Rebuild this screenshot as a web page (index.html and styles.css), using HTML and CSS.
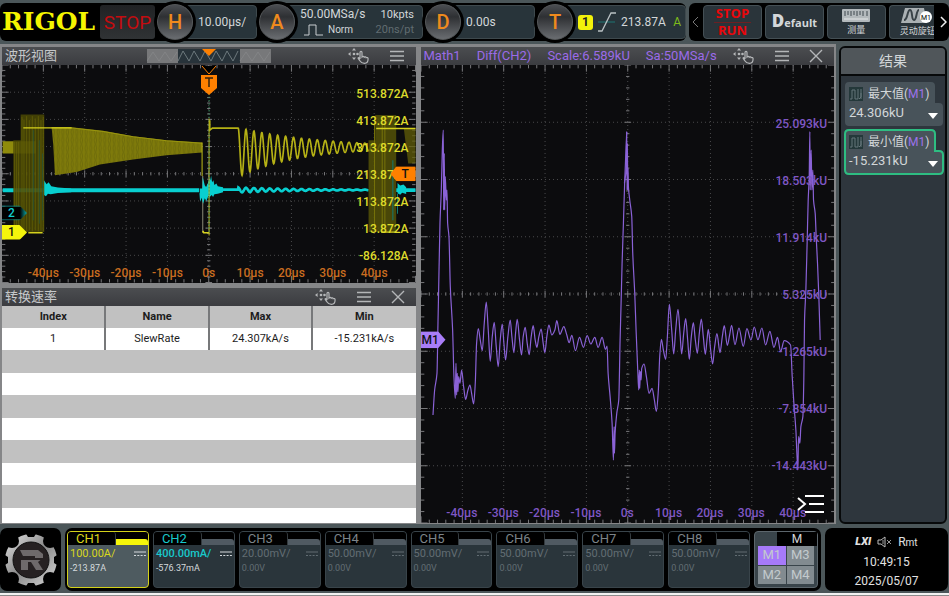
FILE: index.html
```html
<!DOCTYPE html>
<html lang="zh-CN">
<head>
<meta charset="utf-8">
<title>RIGOL</title>
<link rel="stylesheet" href="styles.css">
</head>
<body>
<svg class="defs" aria-hidden="true">
  <symbol id="drag" viewBox="0 0 22 16">
    <g fill="currentColor"><path d="M6 0l2 2.600H4zM6 12l2-2.600H4zM0 6l2.600-2v4z"/><circle cx="6" cy="6" r="1.300"/><circle cx="9.500" cy="6" r="1.300"/></g>
    <path d="M12 11V4.500c0-1.500 2-1.500 2 0V9c1-1 2-.7 2.200.2 1-.7 1.900-.3 2 .5 1-.5 1.900 0 1.900 1 0 3-1 4.600-3.600 4.600-2.500 0-3.700-1-4.700-2.600l-1.600-2.300c-.4-1 .8-1.500 1.800.6z" fill="none" stroke="currentColor" stroke-width="1.200"/>
  </symbol>
  <symbol id="menu" viewBox="0 0 16 12"><path d="M1 1.500h14M1 6h14M1 10.500h14" stroke="currentColor" stroke-width="1.400"/></symbol>
  <symbol id="close" viewBox="0 0 14 14"><path d="M1 1l12 12M13 1L1 13" stroke="currentColor" stroke-width="1.400"/></symbol>
  <symbol id="dc" viewBox="0 0 12 6"><path d="M0 1h12" stroke="currentColor"/><path d="M0 4.500h12" stroke="currentColor" stroke-dasharray="2 1.300"/></symbol>
  <symbol id="stat" viewBox="0 0 14 14"><rect width="14" height="14" fill="#24383a"/><path d="M1 12h2V3h3v9h3V2M12 2v8l-2 2M12 12V6" fill="none" stroke="#65777a"/></symbol>
  <linearGradient id="steel" x1="0" y1="0" x2="1" y2="1"><stop offset="0" stop-color="#e4e4e4"/><stop offset=".5" stop-color="#8a8a8a"/><stop offset="1" stop-color="#dadada"/></linearGradient>
  <pattern id="weave" width="14" height="24" patternUnits="userSpaceOnUse"><path d="M0 0h14v24H0z" fill="#7e7a0b"/><path d="M3 0l3 12-3 12M10 0L8 12l2 12" fill="none" stroke="#6a6709" stroke-width="2"/></pattern>
</svg>

<header class="topbar">
  <div class="bar settings">
    <div class="brand">RIGOL</div>
    <button class="state">STOP</button>
    <div class="group"><button class="knob">H</button><div class="panel">10.00µs/</div></div>
    <div class="group"><button class="knob">A</button>
      <div class="panel acquire">
        <div><span>50.00MSa/s</span><span class="small">10kpts</span></div>
        <div><span class="norm"><svg width="20" height="12" viewBox="0 0 20 12"><path d="M0 11h5V1h7v10h7" fill="none" stroke="#c8cdd0"/></svg>Norm</span><span class="small faint">20ns/pt</span></div>
      </div>
    </div>
    <div class="group"><button class="knob">D</button><div class="panel">0.00s</div></div>
    <div class="group"><button class="knob">T</button>
      <div class="panel trigger"><b class="source">1</b>
        <svg width="20" height="22" viewBox="0 0 20 22"><path d="M1 11h17" stroke="#1d7473"/><path d="M1 20h4L14 2h5" fill="none" stroke="#b9c1c4" stroke-width="1.300"/></svg>
        <span>213.87A</span><span class="auto">A</span></div>
    </div>
  </div>
  <nav class="bar tools">
    <button class="arrow"><svg width="7" height="12" viewBox="0 0 7 12"><path d="M6 1L1 6l5 5" fill="none" stroke="#777"/></svg></button>
    <button class="tool run"><span>STOP</span><span>RUN</span></button>
    <button class="tool default"><span><b>D</b>efault</span></button>
    <button class="tool"><svg width="28" height="14" viewBox="0 0 28 14"><rect width="28" height="13" rx="1" fill="#b3b9bc"/><path d="M3 2v5M6 2v4M9 2v5M12 2v4M15 2v5M18 2v4M21 2v5M25 2v5" stroke="#3e484e"/><path d="M2 10h24" stroke="#e3e6e7"/></svg>测量</button>
    <button class="tool knobtool"><svg width="32" height="17" viewBox="0 0 32 17"><path d="M5 1h19l3 15H1z" fill="#aab0b3"/><path d="M4 13c4 0 3-10 6-10s1 10 4 10 2-10 5-10" fill="none" stroke="#394247" stroke-width="2"/><circle cx="26" cy="10" r="6" fill="#fff"/><text x="26" y="13" text-anchor="middle" font-size="7">M1</text></svg>灵动旋钮</button>
    <button class="arrow"><svg width="7" height="12" viewBox="0 0 7 12"><path d="M1 1l5 5-5 5" fill="none" stroke="#eee" stroke-width="1.500"/></svg></button>
  </nav>
</header>

<main class="workspace">
  <div class="windows">
    <section class="window">
      <div class="title">
        <h2>波形视图</h2>
        <svg class="preview" width="124" height="14" viewBox="0 0 124 14"><path d="M0 0h124v14H0z" fill="#77787a"/><path d="M31 0h62v14H31z" fill="#28333a"/><path d="M0 12L6 3l6 9 6-9 6 9 6-9" fill="none" stroke="#838486"/><path d="M31 12l5-10 6 10 5-10 6 10 5-10 6 10 5-10 6 10 5-10 6 10 5-10" fill="none" stroke="#6d797d"/><path d="M93 12l6-9 6 9 6-9 6 9 6-9" fill="none" stroke="#838486"/><path d="M55 0h14l-7 7z" fill="#ff8000"/></svg>
        <div class="actions"><button><svg width="22" height="16"><use href="#drag"/></svg></button><button><svg width="16" height="12"><use href="#menu"/></svg></button></div>
      </div>
      <div class="plot overview">
        <svg class="canvas" viewBox="0 0 1242 651" preserveAspectRatio="none">
          <g class="graticule"></g>
          <g transform="translate(-6 -15)">
            <path class="c2" d="M8 384h590v12H8z"/>
            <path class="c2" d="M132 360l8 12 6-6 8 12 20 4 40 3v11l-40 2-22 4-8-2-6 8-6-4z"/>
            <path d="M8 243h99v37H8z" fill="#8f8b0c"/>
            <path d="M40 240h22V163h71v352H40z" fill="#494705" opacity=".88"/>
            <path d="M44 245v260M50 245v264M56 245v268M66 170v342M72 178v330M80 168v345M88 180v330M97 168v345M106 175v335M115 168v345M123 180v330M130 170v343" stroke="#6b6708" stroke-width="2" fill="none"/>
            <path d="M100 210v270M118 240v250M128 280v200" stroke="#205a49" fill="none" stroke-width="2"/>
            <path d="M155 201h60l95 11 90 16 100 12 107 7v30l-107 8-100 13-100 15-70 22-65 10-5-90z" fill="url(#weave)"/>
            <path d="M155 203h55l100 11 90 16 100 12 107 7" fill="none" stroke="#99950f" stroke-width="3"/>
            <path d="M70 203h145M85 517h43" stroke="#d5d11d" stroke-width="4"/>
            <path d="M607 247v100" stroke="#c1bd18" stroke-width="3"/><path d="M609 347v170" stroke="#8c8c78" stroke-width="3"/><path d="M609 512l3 5h16" fill="none" stroke="#d5d11d" stroke-width="5"/>
          </g>
          <g transform="translate(594 -15)">
            <path class="c2" d="M0 385h8l1-35 6 25 4 5 5-10 5-15 3 5 2-14 3 20 4-6 3 14 6-4 4 8 16 3v15l-16 4-10 2-4 8-4-6-6 6-4-4-6 16-5-8-5 16-4-18-5 12-2-25H0z"/>
            <path id="ripple" fill="none" stroke="#08cfd0" stroke-width="8"/>
            <path class="c2" d="M590 384h58v11h-58zM594 368l8 8 10-3 8 8v20l-12-4-6 6-8-4z"/>
            <path d="M28 175v350" stroke="#b9b51b" stroke-width="3"/><path d="M28 60v460" stroke="#3c9163" stroke-width="3" stroke-dasharray="4 6"/>
            <path id="ringing" fill="none" stroke="#b5b115" stroke-width="5"/>
            <path d="M507 240h20v-75h63v350h-83z" fill="#555207" opacity=".85"/><path d="M525 170v340M548 170v340M556 170v340" stroke="#77730a" stroke-width="3"/>
            <path d="M580 300v180M594 400v60" stroke="#117875" stroke-width="3"/>
            <path d="M613 205h35v105h-22z" fill="#615e08" opacity=".75"/><path d="M530 205h118M545 515h45" stroke="#d5d11d" stroke-width="4"/>
          </g>
        </svg>
        <svg class="flag-top" width="18" height="30" viewBox="0 0 18 30"><path d="M2 1l7 8 7-8" fill="#000" stroke="#ff8000"/><path d="M1 10h16v13l-8 7-8-7z" fill="#ff8000"/><path d="M5 13h8M9 13v9" stroke="#33200c" stroke-width="1.500"/></svg>
        <div class="ylabels"><span>513.872A</span><span>413.872A</span><span>313.872A</span><span>213.872A</span><span>113.872A</span><span>13.872A</span><span>-86.128A</span></div>
        <div class="xlabels"><span>-40µs</span><span>-30µs</span><span>-20µs</span><span>-10µs</span><span>0s</span><span>10µs</span><span>20µs</span><span>30µs</span><span>40µs</span></div>
        <div class="flag ch2">2</div><div class="flag ch1">1</div><div class="flag level-flag">T</div>
      </div>
    </section>

    <section class="window math">
      <div class="title">
        <h2><span>Math1</span><span>Diff(CH2)</span><span>Scale:6.589kU</span><span>Sa:50MSa/s</span></h2>
        <div class="actions"><button><svg width="22" height="16"><use href="#drag"/></svg></button><button><svg width="16" height="12"><use href="#menu"/></svg></button><button><svg width="14" height="14"><use href="#close"/></svg></button></div>
      </div>
      <div class="plot">
        <svg class="canvas" viewBox="0 0 1242 1374" preserveAspectRatio="none">
          <g class="graticule"></g>
          <g class="trace">
            <path transform="translate(-9 75)" data-points="45,975 50,900 57,850 60,700 62,600 66,400 70,300 73,180 76,120 77,360 79,190 80,360 82,260 85,330 87,300 89,400 93,440 97,590 104,720 108,860 112,925 114,820 116,915 118,850 120,905 122,860 126,880 131,840 137,890 143,928 150,900 156,885 161,910 167,942 172,880 176,760 181,716 187,750 193,782 199,700 205,636 211,720 217,814 223,740 229,697 235,770 241,830 247,750 253,702 258,760 263,810 270,740 277,690 282,740 288,788 293,730 298,688 305,750 311,795 316,740 322,712 328,760 334,794 340,740 346,707 352,750 357,772 363,740 370,717 376,760 381,788 387,740 393,705 402,735 411,720 417,692 426,733 438,710 447,735 454,758 462,736 473,782 485,742 497,772 508,737 519,762 531,742 541,772 553,742 563,778 568,768 571,850 577,920 583,1000 587,1110 589,1010 590,1090 592,1030 597,970 603,930 607,750 610,640 613,520 617,400 621,270 627,125"/>
            <path transform="translate(597 75)" data-points="14,280 19,240 21,125 22,300 23,160 24,300 25,235 26,290 30,330 36,380 39,490 45,610 49,720 54,840 57,900 59,840 60,895 62,845 64,870 66,835 73,822 80,860 88,910 97,895 104,930 110,964 116,900 120,800 125,748 131,780 138,808 143,740 149,643 156,720 162,792 168,720 175,658 181,730 186,792 192,730 198,686 204,750 209,808 215,740 221,698 227,750 233,790 239,730 245,687 251,740 257,793 262,750 266,718 273,780 279,822 285,770 292,731 301,788 308,740 314,707 323,766 330,735 336,706 346,764 358,714 371,769 382,716 394,750 404,711 415,749 427,714 438,765 451,724 463,772 474,742 483,785 494,752 513,765 518,860 523,940 529,1020 535,1140 537,1040 541,1060 544,1010 550,980 553,860 555,690 559,600 563,450 566,330 569,260 571,125 572,300 575,180 577,300 580,240 582,330 587,370 590,440 594,520 598,620 602,750"/>
          </g>
        </svg>
        <div class="ylabels"><span>25.093kU</span><span>18.503kU</span><span>11.914kU</span><span>5.325kU</span><span>-1.265kU</span><span>-7.854kU</span><span>-14.443kU</span></div>
        <div class="xlabels"><span>-40µs</span><span>-30µs</span><span>-20µs</span><span>-10µs</span><span>0s</span><span>10µs</span><span>20µs</span><span>30µs</span><span>40µs</span></div>
        <div class="flag m1">M1</div>
        <button class="expand"><svg width="28" height="20" viewBox="0 0 28 20"><path d="M1 4l7 6-7 6M8 2h19M12 10h15M8 18h19" fill="none" stroke="#fff" stroke-width="2"/></svg></button>
      </div>
    </section>

    <section class="window">
      <div class="title">
        <h2>转换速率</h2>
        <div class="actions"><button><svg width="22" height="16"><use href="#drag"/></svg></button><button><svg width="16" height="12"><use href="#menu"/></svg></button><button><svg width="14" height="14"><use href="#close"/></svg></button></div>
      </div>
      <div class="sheet">
        <table>
          <thead><tr><th>Index</th><th>Name</th><th>Max</th><th>Min</th></tr></thead>
          <tbody>
            <tr><td>1</td><td>SlewRate</td><td>24.307kA/s</td><td>-15.231kA/s</td></tr>
            <tr><td colspan="4"></td></tr><tr><td colspan="4"></td></tr><tr><td colspan="4"></td></tr><tr><td colspan="4"></td></tr><tr><td colspan="4"></td></tr><tr><td colspan="4"></td></tr><tr><td colspan="4"></td></tr>
          </tbody>
        </table>
      </div>
    </section>
  </div>

  <aside class="results">
    <h2>结果</h2>
    <button class="result"><svg class="shape" viewBox="0 0 100 46" preserveAspectRatio="none"><path d="M5 1h82q4 0 4 4v17h4q4 0 4 4v15q0 4-4 4H5q-4 0-4-4V5q0-4 4-4z"/></svg>
      <span class="name"><svg width="14" height="14"><use href="#stat"/></svg>最大值(<i>M1</i>)</span><span class="value">24.306kU<svg width="10" height="6"><path d="M0 0h10L5 6z" fill="#fff"/></svg></span></button>
    <button class="result selected"><svg class="shape" viewBox="0 0 100 46" preserveAspectRatio="none"><path d="M5 1h82q4 0 4 4v17h4q4 0 4 4v15q0 4-4 4H5q-4 0-4-4V5q0-4 4-4z"/></svg>
      <span class="name"><svg width="14" height="14"><use href="#stat"/></svg>最小值(<i>M1</i>)</span><span class="value">-15.231kU<svg width="10" height="6"><path d="M0 0h10L5 6z" fill="#fff"/></svg></span></button>
  </aside>
</main>

<footer class="bottombar">
  <button class="home">
    <svg width="54" height="54" viewBox="0 0 54 54"><circle cx="27" cy="27" r="26" fill="url(#steel)"/><g fill="#000"><circle cx="8" cy="8" r="7"/><circle cx="46" cy="8" r="7"/><circle cx="8" cy="46" r="7"/><circle cx="46" cy="46" r="7"/><path d="M21-1h12l-3 5h-6zM21 55h12l-3-5h-6zM-1 21v12l5-3v-6zM55 21v12l-5-3v-6z"/></g><circle cx="27" cy="27" r="18" fill="#262122" stroke="#111"/><path d="M16 17h18l5 4v4l-5 4 5 8h-7l-5-8h-3v8h-7V27h14v-4H19z" fill="#6e6a6b"/><path d="M12 26h30" stroke="#262122" stroke-width="2"/></svg>
  </button>
  <div class="channels">
    <button class="channel on one"><span class="head"><span class="tab">CH1</span><span class="stripe"></span></span><span class="scale">100.00A/<svg width="12" height="6"><use href="#dc"/></svg></span><span class="offset">-213.87A</span></button>
    <button class="channel on two"><span class="head"><span class="tab">CH2</span><span class="stripe"></span></span><span class="scale">400.00mA/<svg width="12" height="6"><use href="#dc"/></svg></span><span class="offset">-576.37mA</span></button>
    <button class="channel"><span class="head"><span class="tab">CH3</span><span class="stripe"></span></span><span class="scale">20.00mV/<svg width="12" height="6"><use href="#dc"/></svg></span><span class="offset">0.00V</span></button>
    <button class="channel"><span class="head"><span class="tab">CH4</span><span class="stripe"></span></span><span class="scale">50.00mV/<svg width="12" height="6"><use href="#dc"/></svg></span><span class="offset">0.00V</span></button>
    <button class="channel"><span class="head"><span class="tab">CH5</span><span class="stripe"></span></span><span class="scale">50.00mV/<svg width="12" height="6"><use href="#dc"/></svg></span><span class="offset">0.00V</span></button>
    <button class="channel"><span class="head"><span class="tab">CH6</span><span class="stripe"></span></span><span class="scale">50.00mV/<svg width="12" height="6"><use href="#dc"/></svg></span><span class="offset">0.00V</span></button>
    <button class="channel"><span class="head"><span class="tab">CH7</span><span class="stripe"></span></span><span class="scale">50.00mV/<svg width="12" height="6"><use href="#dc"/></svg></span><span class="offset">0.00V</span></button>
    <button class="channel"><span class="head"><span class="tab">CH8</span><span class="stripe"></span></span><span class="scale">50.00mV/<svg width="12" height="6"><use href="#dc"/></svg></span><span class="offset">0.00V</span></button>
    <div class="maths"><span class="mtab">M</span><div class="mgrid"><button class="active">M1</button><button>M3</button><button>M2</button><button>M4</button></div></div>
  </div>
  <div class="status">
    <div class="icons"><b>LXI</b><svg width="15" height="12" viewBox="0 0 15 12"><path d="M1 4h3l4-3v10L4 8H1z" fill="none" stroke="#bbb"/><path d="M6 4v4M10 4l4 4M14 4l-4 4" stroke="#999"/></svg><span>R<small>mt</small></span></div>
    <time>10:49:15</time><time>2025/05/07</time>
  </div>
</footer>
<script src="app.js"></script>
</body>
</html>
```
FILE: styles.css
```css
* { box-sizing: border-box; }
body {
  margin: 0;
  min-height: 100vh;
  display: flex;
  flex-direction: column;
  padding-top: 3px;
  background: #4b5659;
  border-bottom: 1px solid #8b8b8b;
  font-family: Roboto, "Noto Sans CJK SC", sans-serif;
  font-size: 12px;
  color: #d3d7d9;
}
button { font: inherit; color: inherit; border: 0; padding: 0; margin: 0; background: none; }
svg { display: block; flex: none; }
h2 { margin: 0; font-weight: 400; }
.defs { width: 0; height: 0; position: absolute; }

/* top bar */
.topbar { display: grid; grid-template-columns: minmax(0, 686fr) minmax(0, 260fr); gap: 3px; height: 38px; }
.bar { background: #000; border-radius: 6px; display: grid; align-items: center; }
.settings { grid-template-columns: 98px 55px minmax(0, 100fr) minmax(0, 164fr) minmax(0, 110fr) minmax(0, 149fr); gap: 2px; }
.brand { color: #f5f500; font: bold 25px/38px "DejaVu Serif", serif; padding-left: 2px; }
.state { height: 34px; border-radius: 3px; background: linear-gradient(#202224, #303335); color: #c40c10; font-size: 19px; }
.group { display: flex; align-items: center; height: 36px; }
.knob { flex: none; width: 36px; height: 36px; border-radius: 50%; position: relative; color: #ef8a1d; font-size: 20px; font-weight: 500; background: linear-gradient(#4a4d51, #2e3033 35%, #6a6d71); box-shadow: 0 0 0 3px #000; border: 1px solid #55585a; }
.panel { flex: 1; min-width: 0; height: 34px; margin-left: -8px; padding: 0 8px 0 12px; border: 1px solid #3e494d; border-radius: 4px; background: #28343a; display: flex; align-items: center; }
.acquire { flex-direction: column; justify-content: center; align-items: stretch; }
.acquire > div { display: flex; justify-content: space-between; align-items: center; line-height: 15px; }
.small { font-size: 11px; }
.faint { color: #616c71; }
.norm { display: flex; gap: 4px; align-items: center; font-size: 10px; padding-left: 4px; }
.trigger { gap: 4px; padding: 0 4px 0 12px; }
.source { width: 15px; height: 15px; border-radius: 3px; background: #f2f20a; color: #222; font-size: 12px; line-height: 15px; text-align: center; flex: none; }
.auto { margin-left: auto; color: #7fbb1b; }
.tools { grid-template-columns: 10px repeat(3, minmax(0, 60fr)) minmax(0, 46fr) 12px; gap: 3px; padding: 0 0 0 1px; }
.arrow { display: grid; place-items: center; }
.tool { height: 34px; border: 1px solid #444f54; border-radius: 4px; background: #2a343a; display: flex; flex-direction: column; align-items: center; justify-content: center; gap: 1px; font-size: 9px; line-height: 12px; overflow: hidden; white-space: nowrap; }
.knobtool { align-items: flex-start; padding-left: 10px; border-right: 0; border-radius: 4px 0 0 4px; }
.run { color: #e8070b; font: bold 13px/15px "Open Sans", sans-serif; gap: 1px; }
.run span + span { border-top: 1px solid #6b2023; padding: 0 4px; }
.default { font: bold 11px/20px "Open Sans", sans-serif; }
.default b { font-size: 17px; }

/* windows */
.workspace { flex: 1; display: grid; grid-template-columns: minmax(0, 1fr) 108px; gap: 3px; padding: 3px 2px 4px 0; }
.windows { display: grid; grid-template-columns: minmax(0, 1fr) minmax(0, 1fr); grid-template-rows: minmax(0, 1fr) minmax(0, 1fr); column-gap: 5px; row-gap: 5px; padding: 3px 2px 1px; background: #858688; }
.window { display: flex; flex-direction: column; min-width: 0; }
.math { grid-row: span 2; }
.title { height: 18px; flex: none; display: grid; grid-template-columns: 1fr auto 1fr; align-items: center; background: linear-gradient(#4b4d50, #3b3c40); color: #c6c8ca; padding: 0 3px; }
.title h2 { font-size: 13px; line-height: 18px; white-space: nowrap; }
.preview { grid-column: 2; }
.actions { grid-column: 3; justify-self: end; display: flex; align-items: center; gap: 19px; padding-right: 8px; color: #b4b6b8; }
.math h2 { display: flex; gap: 16px; color: #9b6be8; }
.plot { flex: 1; position: relative; background: #0c0c0e; overflow: hidden; min-height: 200px; }
.canvas { position: absolute; inset: 0; width: 100%; height: 100%; }
.ylabels { position: absolute; inset: 2px 7px 0 auto; display: grid; grid-template-rows: 1fr repeat(7, 2fr) 1fr; justify-items: end; align-items: center; line-height: 14px; color: #dedb2b; font-weight: 500; }
.ylabels::before, .xlabels::before { content: ""; }
.xlabels { position: absolute; inset: auto 0 2px 0; display: grid; grid-template-columns: 1fr repeat(9, 2fr) 1fr; text-align: center; line-height: 16px; color: #c96d20; font-weight: 500; }
.math .ylabels, .math .xlabels { color: #7f57c4; }
.c2 { fill: #08cfd0; }
.grid-line { stroke: #4a4a4c; stroke-dasharray: 1 3; vector-effect: non-scaling-stroke; }
.tick { stroke: #77777a; fill: none; vector-effect: non-scaling-stroke; }
.trace path { fill: none; stroke: #8a62d6; stroke-width: 1.2px; stroke-linejoin: round; vector-effect: non-scaling-stroke; }
.flag-top { position: absolute; top: 0; left: 50%; transform: translateX(-50%); }
.flag { position: absolute; left: 0; height: 15px; width: 25px; padding-left: 6px; line-height: 15px; transform: translateY(-50%); clip-path: polygon(0 0, 70% 0, 100% 50%, 70% 100%, 0 100%); color: #111; font-weight: 500; }
.ch2 { top: 68%; background: linear-gradient(90deg, #000 75%, #0b9292); color: #13cfd0; border: 1px solid #0b9292; line-height: 13px; border-left: 0; }
.ch1 { top: 77%; background: #f4f40b; }
.level-flag { top: 50%; left: auto; right: 0; background: #ff8000; padding-left: 11px; clip-path: polygon(0 50%, 24% 0, 100% 0, 100% 100%, 24% 100%); }
.m1 { top: 60%; height: 17px; line-height: 17px; padding-left: 1px; background: #a97df8; }
.expand { position: absolute; right: 9px; bottom: 9px; }

/* table */
.sheet { flex: 1; background: #fff; color: #1c1c1c; }
table { width: 100%; border-collapse: collapse; table-layout: fixed; font-size: 11px; }
tr { height: 22px; background: #fff; }
thead tr, tbody tr:nth-child(even) { background: #c1c1c1; }
tbody tr:nth-child(even) { height: 23px; }
th, td { padding: 0; text-align: center; }
th + th, td + td { border-left: 2px solid #77787a; }

/* results */
.results { margin-top: 2px; border: 2px solid #07090a; border-radius: 6px; background: #2e363d; min-width: 0; }
.results h2 { height: 28px; background: #50565a; border-bottom: 2px solid #07090a; text-align: center; font-size: 14px; line-height: 26px; border-radius: 4px 4px 0 0; margin-bottom: 5px; }
.result { position: relative; display: flex; flex-direction: column; width: calc(100% - 4px); height: 46px; margin: 0 2px 2px 3px; padding: 4px 4px 0 5px; text-align: left; }
.shape { position: absolute; inset: 0; width: 100%; height: 100%; }
.shape path { fill: #48535a; }
.selected .shape path { stroke: #2ebd82; stroke-width: 2; }
.name, .value { position: relative; display: flex; align-items: center; line-height: 18px; font-size: 12px; }
.name svg { margin-right: 5px; }
.name i { font-style: normal; color: #9d72ea; }
.value { justify-content: space-between; font-size: 13px; line-height: 20px; padding-right: 2px; }
.value svg { align-self: flex-end; margin-bottom: 4px; }

/* bottom bar */
.bottombar { height: 67px; display: grid; grid-template-columns: 61px minmax(0, 1fr) 123px; gap: 4px; padding: 0 1px 2px 0; border-bottom: 2px solid #f1f1f1; }
.home, .channels, .status { background: #000; border-radius: 7px; }
.home { display: grid; place-items: center; }
.channels { display: grid; grid-template-columns: repeat(8, minmax(0, 82fr)) minmax(0, 64fr); gap: 4px; padding: 3px 3px 3px 2px; }
.channel { display: flex; flex-direction: column; border: 1px solid #39444a; border-radius: 4px; background: #2a353b; color: #626d73; text-align: left; overflow: hidden; }
.head { display: flex; width: 100%; height: 13px; background: #000; }
.tab { width: 60%; border-right: 1px solid #333a3e; border-radius: 0 3px 0 0; font-size: 13px; line-height: 13px; padding-left: 8px; color: #7c8489; }
.stripe { flex: 1; align-self: flex-end; height: 6px; background: #505a62; border-radius: 0 3px 0 0; }
.scale { display: flex; width: 100%; justify-content: space-between; align-items: center; padding: 0 2px 0 2px; font-size: 11px; line-height: 18px; }
.offset { padding-left: 2px; font-size: 9px; line-height: 10px; }
.on .offset, .on .scale svg { color: #d5dadd; }
.one { border-color: #d4d21a; background: #4e5b60; }
.one .stripe { background: #f6f60a; }
.one .tab, .one .scale { color: #d9d71d; }
.two .tab, .two .scale { color: #19c9cc; }
.two .scale { font-weight: 500; }
.maths { border: 1px solid #5c666c; border-radius: 4px; background: #39444a; padding: 0 3px 3px; display: flex; flex-direction: column; }
.mtab { align-self: flex-end; width: 40px; height: 14px; background: #000; text-align: center; line-height: 14px; margin-right: -3px; }
.mgrid { flex: 1; display: grid; grid-template-columns: 1fr 1fr; grid-template-rows: 1fr 1fr; gap: 1px; }
.mgrid button { background: #828b90; color: #c3cacd; font-size: 13px; line-height: 18px; }
.mgrid .active { background: #a67afa; }
.status { display: flex; flex-direction: column; align-items: center; justify-content: center; gap: 5px; line-height: 14px; color: #e2e2e2; padding-top: 3px; }
.icons { display: flex; align-items: center; gap: 6px; }
.icons b { font-style: italic; font-weight: 900; font-size: 11px; }
.icons small { font-size: 10px; }
```
FILE: app.js
```js
// Graticule: 10 x 8 divisions, five minor ticks per division on edges and centre axes.
document.querySelectorAll('.graticule').forEach(function (g) {
  const box = g.ownerSVGElement.viewBox.baseVal;
  const w = box.width, h = box.height;
  let lines = '', ticks = '';
  for (let i = 1; i < 10; i++) lines += `M${w * i / 10} 0V${h}`;
  for (let i = 1; i < 8; i++) lines += `M0 ${h * i / 8}H${w}`;
  for (let i = 0; i <= 50; i++) {
    const x = w * i / 50, n = i % 5 ? 10 : 20;
    ticks += `M${x} 0v${n}M${x} ${h}v${-n}M${x} ${h / 2 - n / 2}v${n}`;
  }
  for (let i = 0; i <= 40; i++) {
    const y = h * i / 40, n = i % 5 ? 10 : 20;
    ticks += `M0 ${y}h${n}M${w} ${y}h${-n}M${w / 2 - n / 2} ${y}h${n}`;
  }
  g.innerHTML = `<path class="grid-line" fill="none" d="${lines}"/><path class="tick" d="${ticks}"/>`;
});

// Math trace: monotone cubic through the samples, flat at every local extremum.
document.querySelectorAll('.trace path').forEach(function (path) {
  const p = path.dataset.points.split(' ').map(s => s.split(',').map(Number));
  const slope = i => (p[i + 1][1] - p[i][1]) / (p[i + 1][0] - p[i][0]);
  const tangent = p.map(function (_, i) {
    if (i === 0) return slope(0);
    if (i === p.length - 1) return slope(i - 1);
    const a = slope(i - 1), b = slope(i);
    return a * b <= 0 ? 0 : 2 * a * b / (a + b);
  });
  let d = 'M' + p[0];
  for (let i = 1; i < p.length; i++) {
    const k = (p[i][0] - p[i - 1][0]) / 3;
    d += `C${p[i - 1][0] + k} ${p[i - 1][1] + k * tangent[i - 1]} ${p[i][0] - k} ${p[i][1] - k * tangent[i]} ${p[i][0]} ${p[i][1]}`;
  }
  path.setAttribute('d', d);
});

// Damped ringing of channel 1 and the small ripple of channel 2.
let ring = 'M30 180V210L38 204H115', ripple = 'M60 388H115';
for (let x = 116; x <= 560; x += 1) {
  const top = 262 - 57 * Math.exp((127 - x) / 250);
  const low = 262 + 83 * Math.exp((127 - x) / 180);
  const c = Math.cos(2 * Math.PI * (x - 127) / 23.8);
  ring += `L${x} ${((top + low) / 2 + (low - top) / 2 * c).toFixed(1)}`;
  if (x <= 507) ripple += `L${x} ${(389 + 7 * Math.exp((127 - x) / 200) * c).toFixed(1)}`;
}
document.getElementById('ringing').setAttribute('d', ring);
document.getElementById('ripple').setAttribute('d', ripple);
```
